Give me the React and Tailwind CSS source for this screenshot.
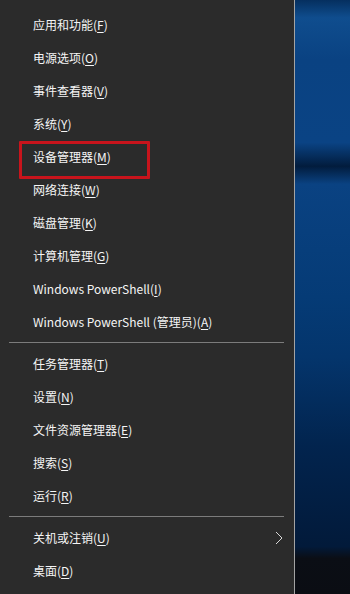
const groups = [
  [
    ['应用和功能', 'F'],
    ['电源选项', 'O'],
    ['事件查看器', 'V'],
    ['系统', 'Y'],
    ['设备管理器', 'M'],
    ['网络连接', 'W'],
    ['磁盘管理', 'K'],
    ['计算机管理', 'G'],
    ['Windows PowerShell', 'I'],
    ['Windows PowerShell (管理员)', 'A'],
  ],
  [
    ['任务管理器', 'T'],
    ['设置', 'N'],
    ['文件资源管理器', 'E'],
    ['搜索', 'S'],
    ['运行', 'R'],
  ],
  [
    ['关机或注销', 'U', true],
    ['桌面', 'D'],
  ],
];

function Item({ label, mnemonic, submenu }) {
  return (
    <div className="h-[33px] flex items-center pl-[33px] pr-[11px] relative">
      <span className="flex-1 whitespace-nowrap">
        {label}(<span className="underline underline-offset-2">{mnemonic}</span>)
      </span>
      {submenu && (
        <svg width="8" height="14" viewBox="0 0 8 14" className="text-[#d8d8d8]">
          <path d="M1 1l6 6-6 6" fill="none" stroke="currentColor" strokeWidth="1" />
        </svg>
      )}
    </div>
  );
}

export default function App() {
  return (
    <div className="w-[350px] h-[594px] flex overflow-hidden bg-black">
      <div
        className="w-[295px] h-full bg-[#2b2b2b] border-r border-[#a3a3a3] text-[#f5f5f5] text-[12px] pt-[8px] relative"
        style={{ fontFamily: '"Noto Sans CJK SC", "Noto Sans", sans-serif' }}
      >
        {groups.map((items, gi) => (
          <div key={gi}>
            {gi > 0 && (
              <div className="h-[9px] flex items-center pl-[9px] pr-[10px]">
                <div className="h-px w-full bg-[#7c7c7c]" />
              </div>
            )}
            {items.map(([label, m, sub]) => (
              <Item key={label} label={label} mnemonic={m} submenu={sub} />
            ))}
          </div>
        ))}
        <div className="absolute left-[19px] top-[141px] w-[131px] h-[38px] border-[3px] border-[#c8141c] rounded-[1px]" />
      </div>
      <div className="flex-1 h-full bg-[linear-gradient(180deg,#052f5f_0%,#0f4d8e_3%,#0a4282_10%,#0a4384_24%,#021c3d_28%,#0a4282_31%,#053b76_50%,#04356c_60%,#02244e_75%,#021a3a_92%,#0b0e15_94%,#0b0d13_100%)]" />
    </div>
  );
}
